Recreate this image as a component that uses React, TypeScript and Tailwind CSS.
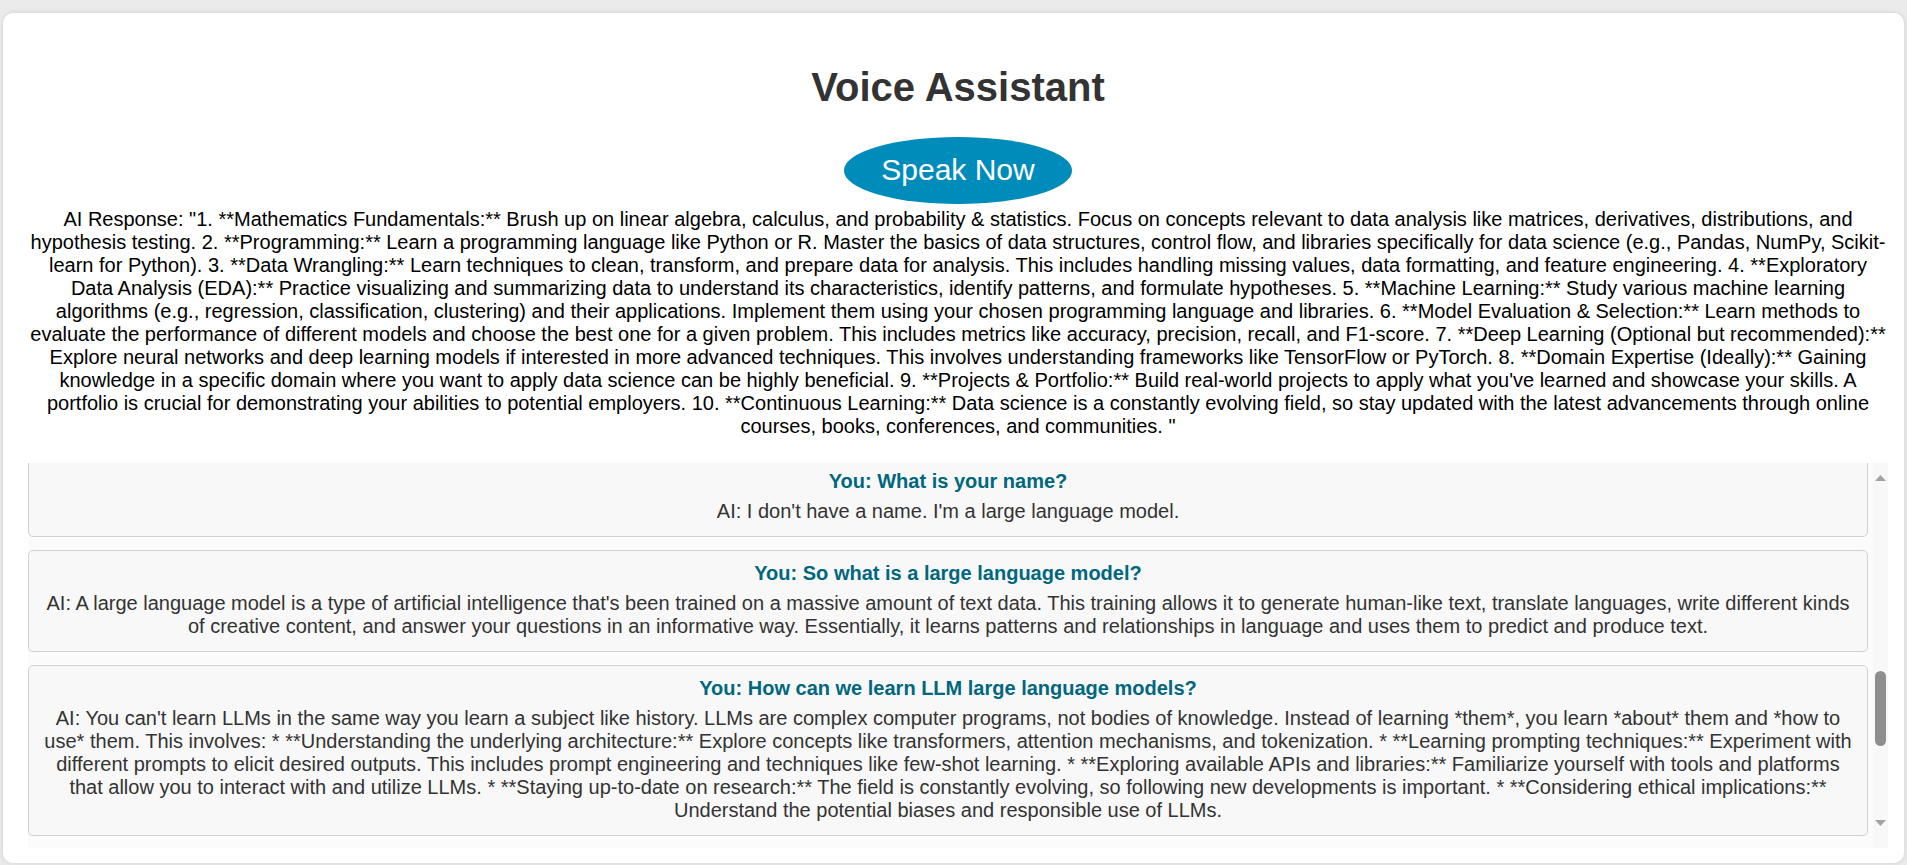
const aiResponse =
  'AI Response: "1. **Mathematics Fundamentals:** Brush up on linear algebra, calculus, and probability & statistics. Focus on concepts relevant to data analysis like matrices, derivatives, distributions, and hypothesis testing. 2. **Programming:** Learn a programming language like Python or R. Master the basics of data structures, control flow, and libraries specifically for data science (e.g., Pandas, NumPy, Scikit-learn for Python). 3. **Data Wrangling:** Learn techniques to clean, transform, and prepare data for analysis. This includes handling missing values, data formatting, and feature engineering. 4. **Exploratory Data Analysis (EDA):** Practice visualizing and summarizing data to understand its characteristics, identify patterns, and formulate hypotheses. 5. **Machine Learning:** Study various machine learning algorithms (e.g., regression, classification, clustering) and their applications. Implement them using your chosen programming language and libraries. 6. **Model Evaluation & Selection:** Learn methods to evaluate the performance of different models and choose the best one for a given problem. This includes metrics like accuracy, precision, recall, and F1-score. 7. **Deep Learning (Optional but recommended):** Explore neural networks and deep learning models if interested in more advanced techniques. This involves understanding frameworks like TensorFlow or PyTorch. 8. **Domain Expertise (Ideally):** Gaining knowledge in a specific domain where you want to apply data science can be highly beneficial. 9. **Projects & Portfolio:** Build real-world projects to apply what you\'ve learned and showcase your skills. A portfolio is crucial for demonstrating your abilities to potential employers. 10. **Continuous Learning:** Data science is a constantly evolving field, so stay updated with the latest advancements through online courses, books, conferences, and communities. "';

const history = [
  {
    q: "What is your name?",
    a: "I don't have a name. I'm a large language model.",
  },
  {
    q: "So what is a large language model?",
    a: "A large language model is a type of artificial intelligence that's been trained on a massive amount of text data. This training allows it to generate human-like text, translate languages, write different kinds of creative content, and answer your questions in an informative way. Essentially, it learns patterns and relationships in language and uses them to predict and produce text.",
  },
  {
    q: "How can we learn LLM large language models?",
    a: "You can't learn LLMs in the same way you learn a subject like history. LLMs are complex computer programs, not bodies of knowledge. Instead of learning *them*, you learn *about* them and *how to use* them. This involves: * **Understanding the underlying architecture:** Explore concepts like transformers, attention mechanisms, and tokenization. * **Learning prompting techniques:** Experiment with different prompts to elicit desired outputs. This includes prompt engineering and techniques like few-shot learning. * **Exploring available APIs and libraries:** Familiarize yourself with tools and platforms that allow you to interact with and utilize LLMs. * **Staying up-to-date on research:** The field is constantly evolving, so following new developments is important. * **Considering ethical implications:** Understand the potential biases and responsible use of LLMs.",
  },
];

function Arrow({ down }: { down?: boolean }) {
  return (
    <svg width="11" height="6" viewBox="0 0 11 6" className="mx-auto block">
      <polygon
        points={down ? "0,0 11,0 5.5,6" : "0,6 11,6 5.5,0"}
        fill="#a3a3a3"
      />
    </svg>
  );
}

function ChatEntry({ q, a, first }: { q: string; a: string; first?: boolean }) {
  return (
    <div
      className={
        "mb-[13px] rounded-[5px] border border-[#d2d2d2] bg-[#f8f8f8] px-[10px] pt-[11px] pb-[13px] text-center " +
        (first ? "-mt-[5px]" : "")
      }
    >
      <p className="mb-[7px] font-bold text-[#00677d]">You: {q}</p>
      <p className="text-[#333333]">AI: {a}</p>
    </div>
  );
}

export default function App() {
  return (
    <div className="min-h-[865px] bg-[#ebebeb] px-[3px] pt-[13px] font-['Liberation_Sans',Arial,sans-serif] text-[20px] leading-[23px]">
      <div className="h-[850px] w-[1901px] rounded-[10px] bg-white pt-[24px] pr-[16px] pb-[15px] pl-[25px] shadow-[0_0_5px_rgba(0,0,0,0.12)]">
        <h1 className="mt-[27px] mb-[27px] text-center text-[40px] leading-[46px] font-bold text-[#333333]">
          Voice Assistant
        </h1>
        <button className="mx-auto block rounded-[50%] bg-[#008cba] px-[37px] py-4 text-[30px] leading-[34.5px] text-white">
          Speak Now
        </button>
        <p className="mt-[4px] text-center text-black">{aiResponse}</p>
        <div className="mt-[25px] flex h-[385px] bg-[#fbfbfb]">
          <div className="flex-1 overflow-hidden pr-[5px]">
            {history.map((h, i) => (
              <ChatEntry key={i} q={h.q} a={h.a} first={i === 0} />
            ))}
          </div>
          <div className="flex w-[15px] flex-col bg-[#f8f8f8] pt-[12px]">
            <Arrow />
            <div className="mx-auto mt-[190px] h-[75px] w-[11px] rounded-full bg-[#8e8e8e]" />
            <div className="flex-1" />
            <div className="pb-[22px]">
              <Arrow down />
            </div>
          </div>
        </div>
      </div>
    </div>
  );
}
